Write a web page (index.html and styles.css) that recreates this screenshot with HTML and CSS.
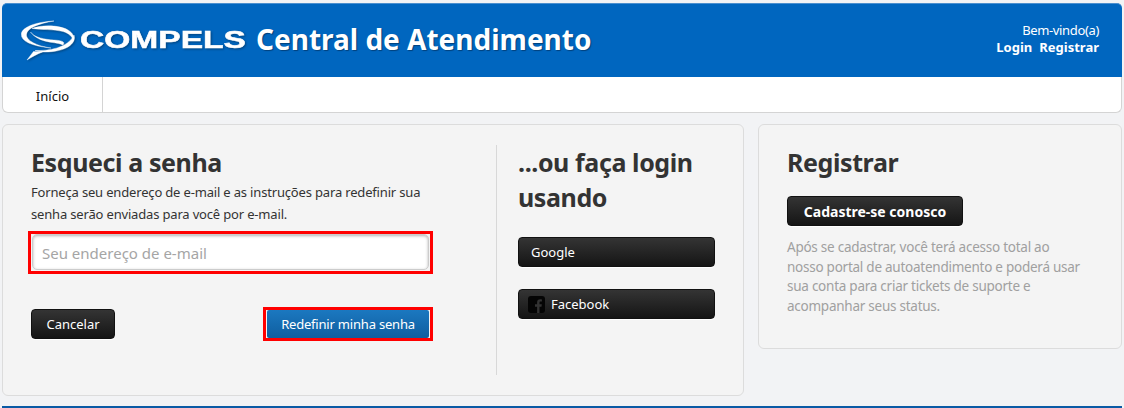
FILE: index.html
```html
<!DOCTYPE html>
<html lang="pt-BR">
<head>
<meta charset="utf-8">
<title>Central de Atendimento</title>
<link rel="stylesheet" href="styles.css">
</head>
<body>
<div class="page">
  <header class="masthead">
    <div class="brand">
      <svg class="logo" width="226" height="44" viewBox="0 0 226 44" aria-label="Compels">
        <g class="swoosh">
          <path d="M33 2C15 3 .5 8 .3 15.500 .2 22 10 27 30 29 16 27 5 21.500 5.500 15.500 6 9 18 4.500 33 2z"/>
          <path d="M11 9.500C19 6 38 5.500 47 11c5 3 7 7 5 11 0-4-4-7.500-10-9.500C33 10 20 11 11 9.500z"/>
          <path d="M9.500 13C13 18.500 24 20.500 33 21c7 .5 12 1.500 9 5C36 22.500 18 25 9.500 13z"/>
          <path d="M53 16c3 9-9 17-29 17-4 0-7-.5-10-1.500C28 32 47 29 53 16z"/>
          <path d="M6 41l6.500-8.500 9 .5C16 35 11 38 6 41z"/>
        </g>
        <text class="logo-word" x="59" y="29" textLength="166" lengthAdjust="spacingAndGlyphs">COMPELS</text>
      </svg>
      <span class="site-title">Central de Atendimento</span>
    </div>
    <div class="account">
      <div class="welcome">Bem-vindo(a)</div>
      <div class="account-links"><a href="#">Login</a><a href="#">Registrar</a></div>
    </div>
  </header>
  <nav class="navbar"><a class="nav-item" href="#">Início</a></nav>
  <main class="content">
    <section class="card card-main">
      <div class="reset">
        <h1 class="heading">Esqueci a senha</h1>
        <p class="intro">Forneça seu endereço de e-mail e as instruções para redefinir sua senha serão enviadas para você por e-mail.</p>
        <div class="mark field-mark"><input class="field" type="text" placeholder="Seu endereço de e-mail"></div>
        <div class="actions">
          <a class="btn btn-dark btn-cancel" href="#">Cancelar</a>
          <div class="mark btn-mark"><a class="btn btn-blue" href="#">Redefinir minha senha</a></div>
        </div>
      </div>
      <div class="social">
        <h2 class="heading">...ou faça login usando</h2>
        <a class="btn btn-dark btn-social" href="#">Google</a>
        <a class="btn btn-dark btn-social btn-fb" href="#">
          <svg class="fb" width="17" height="17" viewBox="0 0 17 17"><rect width="17" height="17" rx="3" fill="#050505"/><path d="M11.500 17v-6.300h2l.3-2.500h-2.300V6.800c0-.8.3-1.200 1.200-1.200h1.200V3.400c-.4 0-1-.1-1.700-.1-1.900 0-3.100 1.100-3.100 3.200v1.700H7v2.500h2.100V17z" fill="#333"/></svg>
          Facebook
        </a>
      </div>
    </section>
    <aside class="card card-side">
      <h2 class="heading">Registrar</h2>
      <a class="btn btn-dark btn-register" href="#">Cadastre-se conosco</a>
      <p class="side-text">Após se cadastrar, você terá acesso total ao nosso portal de autoatendimento e poderá usar sua conta para criar tickets de suporte e acompanhar seus status.</p>
    </aside>
  </main>
</div>
<div class="footer-bar"></div>
</body>
</html>
```
FILE: styles.css
```css
* { box-sizing: border-box; }
html, body { height: 100%; }
body {
  margin: 0;
  height: 408px;
  overflow: hidden;
  background: #f2f3f5;
  font-family: "Noto Sans", "DejaVu Sans", sans-serif;
  color: #333;
}
a { text-decoration: none; color: inherit; }
.page { padding: 3px 2px 0; }
.masthead {
  height: 74px;
  background: #0066bf;
  border-top: 1px solid #4a8fcf;
  border-radius: 5px 5px 0 0;
  display: flex;
  justify-content: space-between;
  padding: 0 23px 0 19px;
  color: #fff;
}
.brand { display: flex; align-items: flex-start; padding-top: 15px; }
.logo { flex: none; filter: drop-shadow(1px 1px 1px rgba(0,0,0,.35)); }
.swoosh { fill: #fff; stroke: #fff; stroke-width: .4px; }
.logo-word {
  font-family: "Liberation Sans", sans-serif;
  font-weight: 700;
  font-size: 24px;
  fill: #fff;
  stroke: #fff;
  stroke-width: .5px;
}
.site-title {
  margin: 4px 0 0 9px;
  font-size: 28px;
  line-height: 32px;
  font-weight: 700;
  text-shadow: 1px 1px 1px rgba(0,40,80,.6);
  white-space: nowrap;
}
.account { text-align: right; font-size: 13px; padding-top: 18px; line-height: 17px; }
.welcome { letter-spacing: -.35px; }
.account-links { font-weight: 700; display: flex; justify-content: flex-end; gap: 7px; }
.navbar {
  height: 36px;
  background: #fff;
  border: 1px solid #d4d4d4;
  border-top: 0;
  border-radius: 0 0 6px 6px;
  display: flex;
}
.nav-item {
  width: 100px;
  border-right: 1px solid #d4d4d4;
  display: flex;
  align-items: center;
  justify-content: center;
  padding-top: 2px;
  font-size: 13px;
  color: #111;
}
.content { display: flex; gap: 14px; align-items: flex-start; margin-top: 11px; }
.card {
  background: #f4f4f4;
  border: 1px solid #dcdcdc;
  border-radius: 6px;
}
.card-main { width: 742px; height: 272px; display: flex; padding: 20px 0 20px 28px; }
.card-side { width: 364px; height: 225px; padding: 20px 28px 0; }
.reset { width: 466px; border-right: 1px solid #d8d8d8; padding-right: 64px; }
.social { width: 220px; padding-left: 21px; }
.heading {
  margin: 0;
  font-size: 25px;
  line-height: 35px;
  font-weight: 700;
  letter-spacing: -.4px;
  color: #333;
}
.intro {
  margin: 1px 0 0;
  width: 402px;
  font-size: 13px;
  line-height: 22px;
  letter-spacing: -.17px;
  color: #333;
}
.mark { border: 3px solid #f00; background: #f4f4f4; }
.field-mark { width: 405px; height: 43px; margin: 6px 0 0 -3px; padding: 0 1px; }
.field {
  width: 100%;
  height: 36px;
  border: 1px solid #ccc;
  border-radius: 5px;
  box-shadow: inset 0 1px 3px rgba(0,0,0,.3);
  background: #fff;
  padding: 1px 9px 0;
  font-family: inherit;
  font-size: 15px;
  display: block;
}
.field::placeholder { color: #a5a5a5; opacity: 1; }
.actions { display: flex; justify-content: space-between; align-items: center; width: 402px; margin-top: 33px; }
.btn {
  display: flex;
  align-items: center;
  border-radius: 4px;
  height: 30px;
  font-size: 13px;
  color: #fff;
  white-space: nowrap;
}
.btn-dark {
  background: linear-gradient(#343434, #151515);
  border: 1px solid #111;
  box-shadow: 0 1px 0 #fff;
}
.btn-cancel { width: 84px; justify-content: center; }
.btn-mark { width: 170px; height: 34px; padding: 0 1px; }
.btn-blue {
  height: 28px;
  justify-content: center;
  letter-spacing: -.2px;
  background: linear-gradient(#1b78c0, #0f5e9f);
  border-radius: 2px;
}
.btn-social { width: 197px; margin-top: 22px; padding-left: 12px; }
.btn-fb { padding-left: 9px; gap: 6px; }
.fb { flex: none; }
.btn-register { width: 176px; margin-top: 16px; justify-content: center; font-size: 14px; font-weight: 700; }
.side-text {
  margin: 12px 0 0;
  width: 300px;
  font-size: 13.5px;
  line-height: 19.7px;
  letter-spacing: -.25px;
  color: #a0a0a0;
}
.footer-bar { position: absolute; left: 2px; right: 2px; top: 406px; height: 2px; background: #0a5aa5; }
```
